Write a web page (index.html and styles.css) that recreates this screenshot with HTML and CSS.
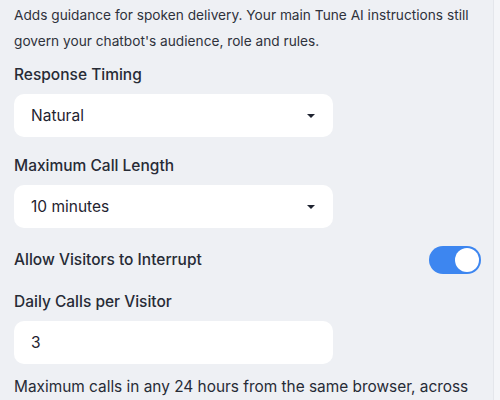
FILE: index.html
```html
<!DOCTYPE html>
<html lang="en">
<head>
    <meta charset="UTF-8">
    <title>Voice Settings</title>
    <link rel="stylesheet" href="styles.css">
</head>
<body>
    <div class="panel">
        <p class="intro">Adds guidance for spoken delivery. Your main Tune AI instructions still govern your chatbot's audience, role and rules.</p>

        <div class="field">
            <label class="field-label">Response Timing</label>
            <div class="select">
                <span>Natural</span>
                <span class="caret"></span>
            </div>
        </div>

        <div class="field">
            <label class="field-label">Maximum Call Length</label>
            <div class="select">
                <span>10 minutes</span>
                <span class="caret"></span>
            </div>
        </div>

        <div class="toggle-row">
            <label class="field-label">Allow Visitors to Interrupt</label>
            <div class="toggle on"><span class="knob"></span></div>
        </div>

        <div class="field">
            <label class="field-label">Daily Calls per Visitor</label>
            <div class="input">3</div>
            <p class="help">Maximum calls in any 24 hours from the same browser, across all sessions.</p>
        </div>
    </div>
</body>
</html>
```

FILE: styles.css
```css
body {
    margin: 0;
    font-family: Inter, "Noto Sans", sans-serif;
    background: #f4f5f8;
    color: #272b36;
}
.panel {
    width: 494px;
    box-sizing: border-box;
    padding: 2px 12px 0 14px;
    background: #eef0f4;
    border-right: 1px solid #e4e6eb;
    height: 400px;
    overflow: hidden;
}
.intro {
    margin: 0 0 10px 0;
    font-size: 13.7px;
    line-height: 26px;
    color: #2e323c;
}
.field {
    margin-bottom: 18px;
}
.field-label {
    display: block;
    font-size: 15.5px;
    font-weight: 500;
    line-height: 22px;
    margin-bottom: 8px;
    color: #272b36;
}
.select, .input {
    width: 319px;
    height: 43px;
    box-sizing: border-box;
    background: #fff;
    border-radius: 10px;
    padding: 0 16px 0 17px;
    display: flex;
    align-items: center;
    justify-content: space-between;
    font-size: 15.5px;
    color: #1f2330;
}
.caret {
    width: 0;
    height: 0;
    border-left: 4px solid transparent;
    border-right: 4px solid transparent;
    border-top: 4px solid #1f2330;
    margin-right: 2px;
}
.toggle-row {
    display: flex;
    align-items: center;
    justify-content: space-between;
    margin-bottom: 17px;
}
.toggle-row .field-label {
    margin-bottom: 0;
}
.toggle {
    width: 52px;
    height: 28px;
    border-radius: 14px;
    background: #d5d8de;
    position: relative;
}
.toggle.on {
    background: #3d86f0;
}
.knob {
    position: absolute;
    top: 2px;
    left: 2px;
    width: 24px;
    height: 24px;
    border-radius: 50%;
    background: #fff;
}
.toggle.on .knob {
    left: 26px;
}
.help {
    margin: 11px 0 0 0;
    font-size: 15.4px;
    line-height: 24px;
    color: #272b36;
}
```
